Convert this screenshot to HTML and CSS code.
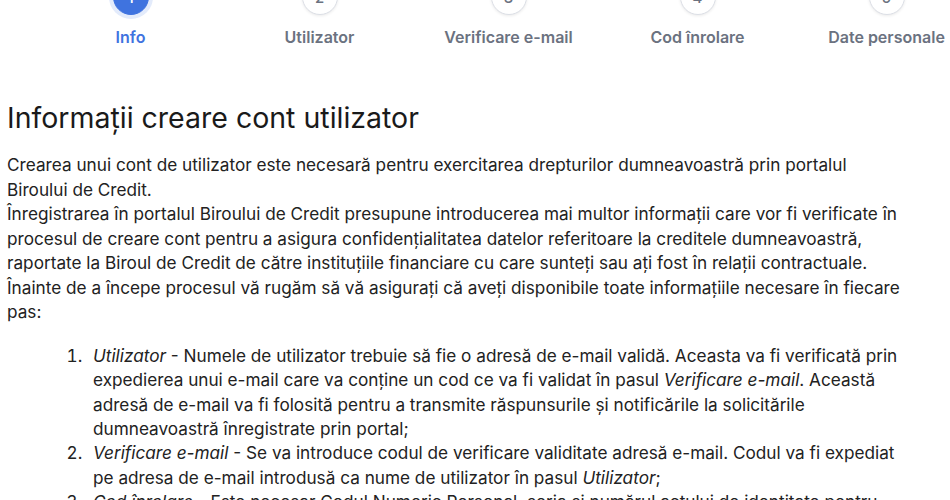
FILE: index.html
```html
<!DOCTYPE html>
<html lang="ro">
<head>
  <meta charset="UTF-8" />
  <meta name="viewport" content="width=device-width, initial-scale=1.0"/>
  <title>Creare cont utilizator</title>
  <link rel="stylesheet" href="styles.css">
</head>
<body>
  <ol class="stepper">
    <li class="step active"><span class="step-num">1</span><span class="step-label">Info</span></li>
    <li class="step"><span class="step-num">2</span><span class="step-label">Utilizator</span></li>
    <li class="step"><span class="step-num">3</span><span class="step-label">Verificare e-mail</span></li>
    <li class="step"><span class="step-num">4</span><span class="step-label">Cod înrolare</span></li>
    <li class="step"><span class="step-num">5</span><span class="step-label">Date personale</span></li>
  </ol>

  <main class="content">
    <h2 class="title">Informații creare cont utilizator</h2>
    <p>Crearea unui cont de utilizator este necesară pentru exercitarea drepturilor dumneavoastră prin portalul Biroului de Credit.</p>
    <p>Înregistrarea în portalul Biroului de Credit presupune introducerea mai multor informații care vor fi verificate în procesul de creare cont pentru a asigura confidențialitatea datelor referitoare la creditele dumneavoastră, raportate la Biroul de Credit de către instituțiile financiare cu care sunteți sau ați fost în relații contractuale.</p>
    <p>Înainte de a începe procesul vă rugăm să vă asigurați că aveți disponibile toate informațiile necesare în fiecare pas:</p>

    <ol class="steps-info">
      <li><em>Utilizator</em> - Numele de utilizator trebuie să fie o adresă de e-mail validă. Aceasta va fi verificată prin expedierea unui e-mail care va conține un cod ce va fi validat în pasul <em>Verificare e-mail</em>. Această adresă de e-mail va fi folosită pentru a transmite răspunsurile și notificările la solicitările dumneavoastră înregistrate prin portal;</li>
      <li><em>Verificare e-mail</em> - Se va introduce codul de verificare validitate adresă e-mail. Codul va fi expediat pe adresa de e-mail introdusă ca nume de utilizator în pasul <em>Utilizator</em>;</li>
      <li><em>Cod înrolare</em> - Este necesar Codul Numeric Personal, seria și numărul actului de identitate pentru verificarea identității dumneavoastră;</li>
    </ol>
  </main>
</body>
</html>
```

FILE: styles.css
```css
* {
  box-sizing: border-box;
}

body {
  margin: 0;
  font-family: 'Inter', 'Noto Sans', sans-serif;
  color: #1f1f1f;
  background: #fff;
  overflow: hidden;
}

/* wizard header */
.stepper {
  display: flex;
  list-style: none;
  margin: -21px 0 0 36px;
  padding: 0;
  width: 945px;
}

.step {
  flex: 1;
  display: flex;
  flex-direction: column;
  align-items: center;
  gap: 12px;
}

.step-num {
  width: 36px;
  height: 36px;
  border-radius: 50%;
  display: flex;
  align-items: center;
  justify-content: center;
  font-size: 15px;
  font-weight: 500;
  color: #6b7280;
  background: #fff;
  border: 1.5px solid #dcdfe6;
  box-shadow: 0 1px 3px rgba(0, 0, 0, 0.08);
}

.step-label {
  font-size: 16px;
  font-weight: 600;
  color: #6b7280;
}

.step.active .step-num {
  background: #3f73df;
  border-color: #3f73df;
  color: #fff;
  box-shadow: 0 0 0 4px #e3ebfb;
}

.step.active .step-label {
  color: #3f73df;
}

/* body text */
.content {
  padding: 0 44px 0 7px;
}

.title {
  font-size: 28.5px;
  font-weight: 400;
  line-height: 1.2;
  margin: 54px 0 18px;
  color: #1a1a1a;
}

.content p {
  font-size: 17.2px;
  line-height: 24.5px;
  margin: 0;
  color: #222;
}

.steps-info {
  margin: 19px 0 0;
  padding-left: 80px;
  font-size: 17.2px;
  line-height: 24.4px;
  color: #222;
}

.steps-info li {
  padding-left: 6px;
}
```
